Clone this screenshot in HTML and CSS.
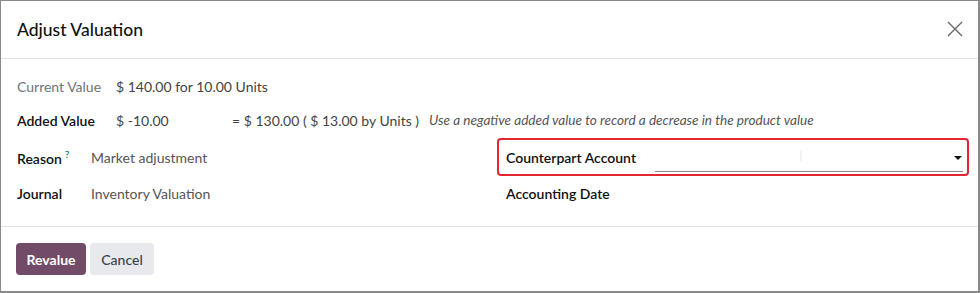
FILE: index.html
```html
<!doctype html>
<html lang="en">
    <head>
        <meta charset="UTF-8" />
        <meta name="viewport" content="width=device-width, initial-scale=1.0" />
        <title>Adjust Valuation</title>
        <link rel="stylesheet" href="styles.css">
    </head>
    <body>
        <div class="modal">
            <div class="modal-header">
                <h4>Adjust Valuation</h4>
                <button class="btn-close" type="button" aria-label="Close">
                    <svg width="16" height="16" viewBox="0 0 16 16">
                        <path d="M1 1 L15 15 M15 1 L1 15" stroke="#666" stroke-width="1.4" fill="none" />
                    </svg>
                </button>
            </div>
            <div class="modal-body">
                <!-- top rows -->
                <div class="row">
                    <span class="label muted">Current Value</span>
                    <span class="value">$ 140.00 for 10.00 Units</span>
                </div>
                <div class="row">
                    <span class="label">Added Value</span>
                    <span class="value added">$ -10.00</span>
                    <span class="value">= $ 130.00 ( $ 13.00 by Units )</span>
                    <span class="help">Use a negative added value to record a decrease in the product value</span>
                </div>

                <!-- two columns -->
                <div class="columns">
                    <div class="col">
                        <div class="row field">
                            <span class="label short">Reason<sup>?</sup></span>
                            <span class="value muted">Market adjustment</span>
                        </div>
                        <div class="row field">
                            <span class="label short">Journal</span>
                            <span class="value muted">Inventory Valuation</span>
                        </div>
                    </div>
                    <div class="col">
                        <div class="row field highlight">
                            <span class="label wide">Counterpart Account</span>
                            <div class="select">
                                <span class="cursor">I</span>
                                <span class="caret"></span>
                            </div>
                        </div>
                        <div class="row field indent">
                            <span class="label wide">Accounting Date</span>
                        </div>
                    </div>
                </div>
            </div>
            <div class="modal-footer">
                <button class="btn btn-primary" type="button">Revalue</button>
                <button class="btn btn-secondary" type="button">Cancel</button>
            </div>
        </div>
    </body>
</html>
```

FILE: styles.css
```css
body {
    margin: 0;
    font-family: Lato, "Liberation Sans", sans-serif;
    font-size: 14px;
    color: #212529;
    background: #fff;
}
.modal {
    height: 293px;
    box-sizing: border-box;
    border-top: 1px solid #8a8a8a;
    border-left: 1px solid #8a8a8a;
    border-right: 2px solid #8a8a8a;
    border-bottom: 2px solid #8a8a8a;
    background: #fff;
}
.modal-header {
    display: flex;
    align-items: center;
    justify-content: space-between;
    height: 57px;
    padding: 0 14px 0 16px;
    border-bottom: 1px solid #dee2e6;
}
.modal-header h4 {
    margin: 0;
    font-size: 17.5px;
    font-weight: 500;
    color: #111;
}
.btn-close {
    border: none;
    background: none;
    padding: 0;
    width: 18px;
    height: 18px;
    cursor: pointer;
}
.modal-body {
    padding: 16px 0 12px 16px;
    height: 139px;
}
.row {
    display: flex;
    align-items: center;
    height: 22px;
}
.row + .row {
    margin-top: 12px;
}
.label {
    flex: 0 0 99px;
    font-weight: 600;
    color: #111;
}
.label.muted {
    font-weight: 400;
    color: #6c757d;
}
.label.short {
    flex-basis: 74px;
}
.label.wide {
    flex-basis: 149px;
}
.label sup {
    color: #017e84;
    font-size: 10px;
    margin-left: 3px;
}
.value {
    color: #444;
}
.value.muted {
    color: #555;
}
.value.added {
    width: 116px;
}
.help {
    margin-left: 10px;
    font-size: 13.6px;
    font-style: italic;
    color: #555;
}
.columns {
    display: flex;
    margin-top: 8px;
}
.col {
    display: flex;
    flex-direction: column;
}
.col:first-child {
    width: 480px;
}
.col:last-child {
    width: 472px;
}
.field {
    height: 36px;
}
.field + .field {
    margin-top: 0;
}
.highlight {
    border: 2px solid #e3262f;
    border-radius: 4px;
    padding: 0 4px 0 7px;
    box-sizing: border-box;
    height: 38px;
    margin-top: -1px;
}
.highlight + .field {
    margin-top: -1px;
}
.indent {
    padding-left: 9px;
}
.select {
    position: relative;
    flex: 1;
    height: 24px;
    margin-top: 4px;
    border-bottom: 1px solid #888;
}
.cursor {
    position: absolute;
    left: 144px;
    top: 0;
    color: #e6e6e6;
    font-weight: 300;
}
.caret {
    position: absolute;
    right: 1px;
    top: 9px;
    border-left: 4px solid transparent;
    border-right: 4px solid transparent;
    border-top: 4px solid #111;
}
.modal-footer {
    display: flex;
    gap: 4px;
    padding: 16px 15px;
    border-top: 1px solid #dee2e6;
}
.btn {
    height: 32px;
    padding: 0 10px;
    border: none;
    border-radius: 4px;
    font-family: inherit;
    font-size: 14px;
    cursor: pointer;
}
.btn-primary {
    width: 70px;
    background-color: #714b67;
    color: #fff;
    font-weight: 700;
}
.btn-secondary {
    width: 64px;
    background-color: #e7e9ed;
    color: #374151;
    font-weight: 500;
}
```
